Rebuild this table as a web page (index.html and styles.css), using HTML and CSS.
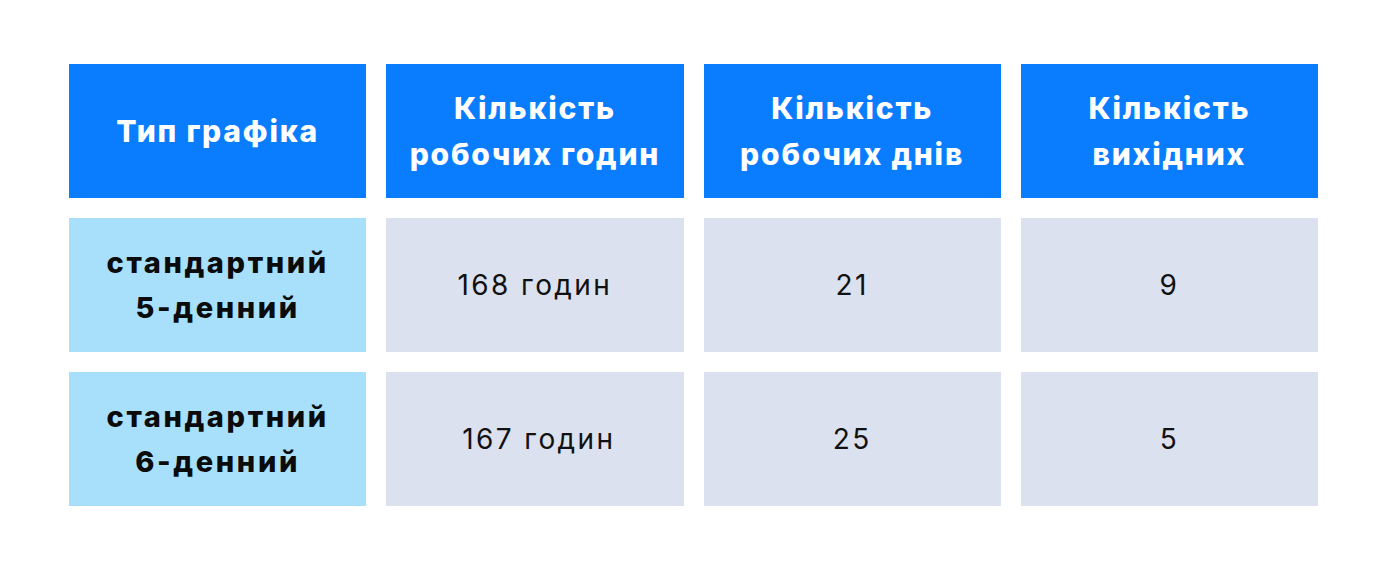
FILE: index.html
```html
<!DOCTYPE html>
<html lang="uk">
<head>
<meta charset="utf-8">
<link rel="stylesheet" href="styles.css">
</head>
<body>
<div class="table">
  <div class="cell head">Тип графіка</div>
  <div class="cell head">Кількість<br>робочих годин</div>
  <div class="cell head">Кількість<br>робочих днів</div>
  <div class="cell head">Кількість<br>вихідних</div>

  <div class="cell type">стандартний<br>5-денний</div>
  <div class="cell val">168 годин</div>
  <div class="cell val">21</div>
  <div class="cell val">9</div>

  <div class="cell type">стандартний<br>6-денний</div>
  <div class="cell val shift">167 годин</div>
  <div class="cell val">25</div>
  <div class="cell val">5</div>
</div>
</body>
</html>
```

FILE: styles.css
```css
html, body {
  margin: 0;
  padding: 0;
  background: #ffffff;
}
body {
  width: 1390px;
  height: 572px;
  font-family: Inter, "Noto Sans", sans-serif;
}
.table {
  display: grid;
  grid-template-columns: repeat(4, 1fr);
  grid-auto-rows: 134px;
  column-gap: 20px;
  row-gap: 20px;
  width: 1249px;
  margin: 64px 0 0 69px;
}
.cell {
  display: flex;
  align-items: center;
  justify-content: center;
  text-align: center;
}
.head {
  background: #0a7dff;
  color: #ffffff;
  font-weight: 800;
  font-size: 30px;
  line-height: 46px;
  letter-spacing: 1.8px;
}
.type {
  background: #a8e0fc;
  color: #0b0b0b;
  font-weight: 800;
  font-size: 29px;
  line-height: 45px;
  letter-spacing: 2.6px;
}
.val {
  background: #dce1ef;
  color: #111111;
  font-size: 28px;
  font-weight: 400;
  letter-spacing: 2.4px;
}
.shift {
  padding-left: 8px;
}
```
